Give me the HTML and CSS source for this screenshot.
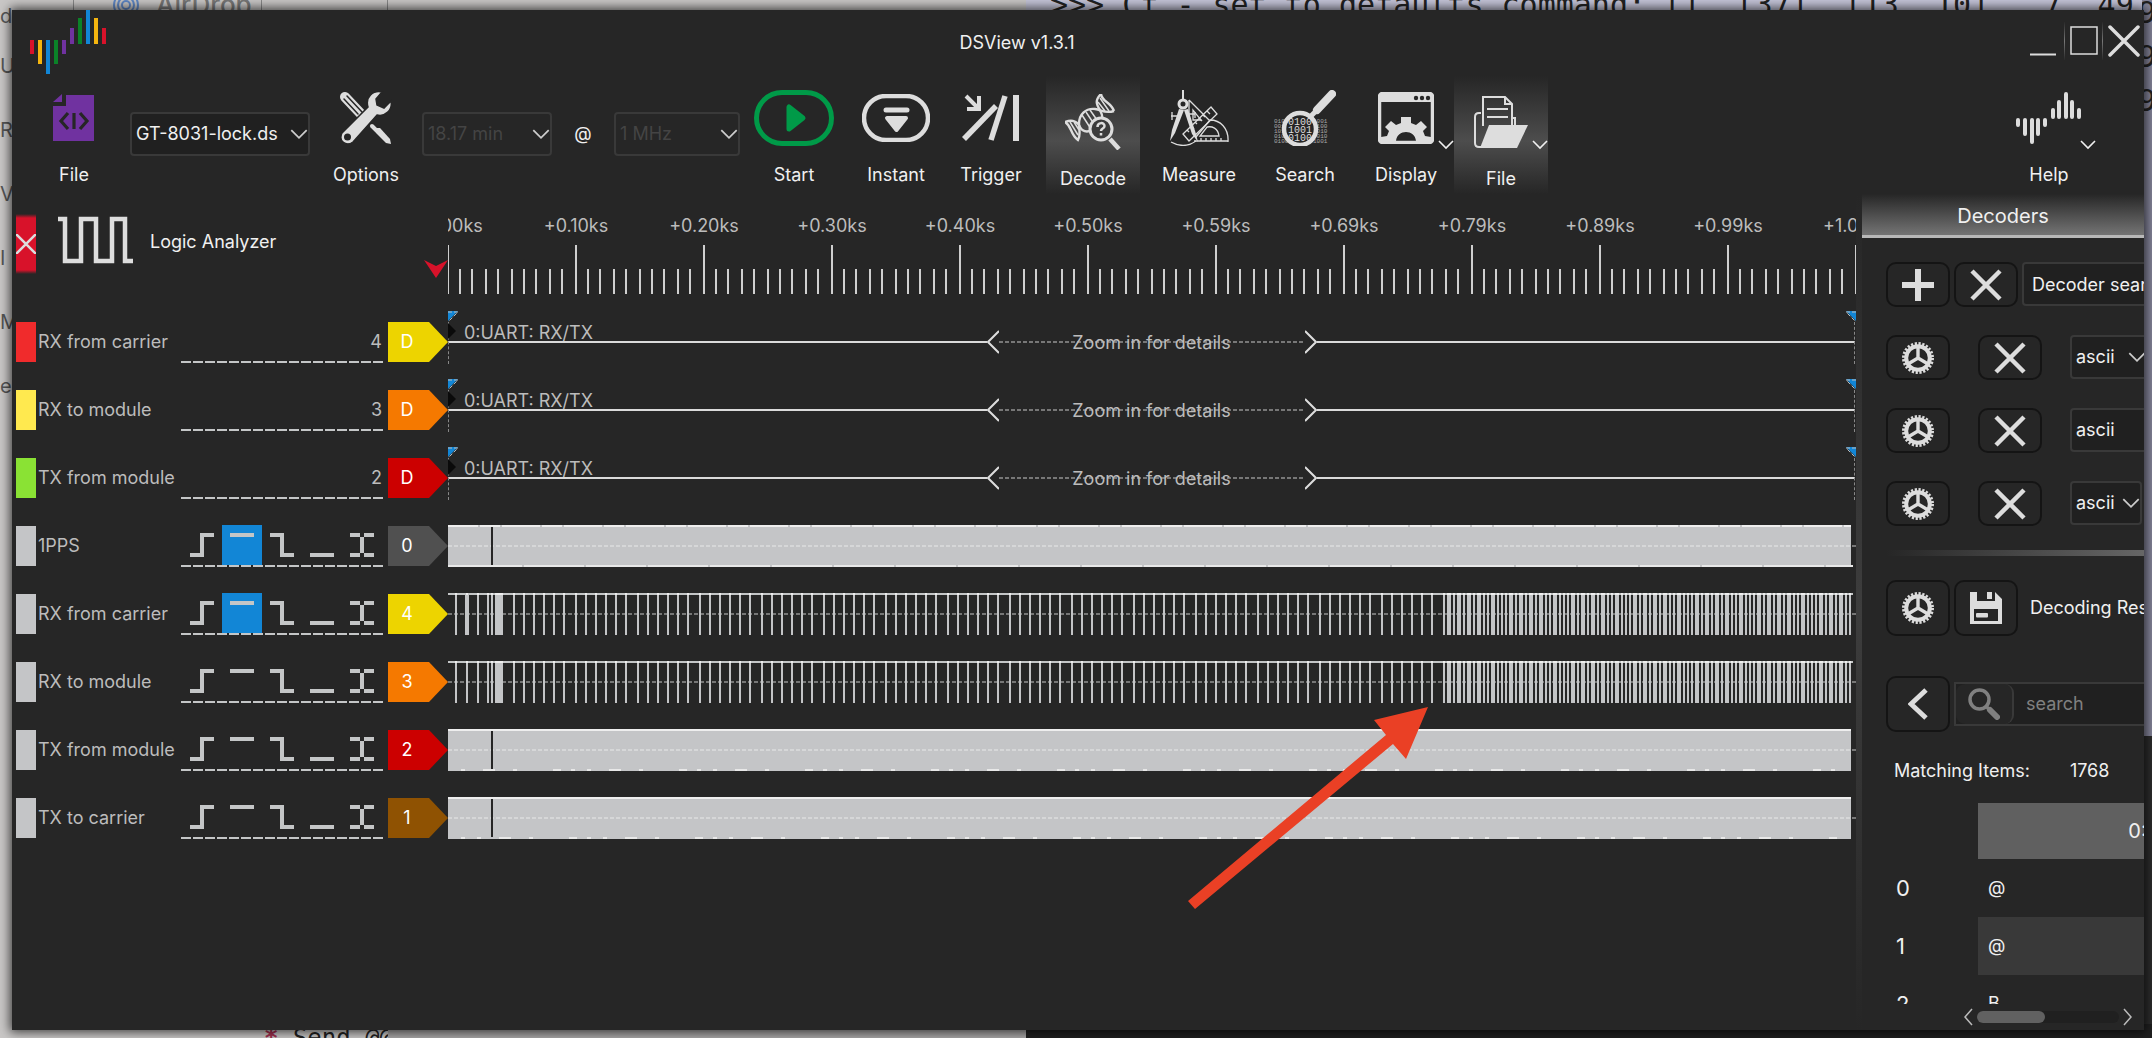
FILE: index.html
```html
<!DOCTYPE html>
<html lang="en">
<head>
<meta charset="utf-8">
<title>DSView v1.3.1</title>
<link rel="stylesheet" href="styles.css">
</head>
<body>
<svg class="sprite" aria-hidden="true">
  <symbol id="chev" viewBox="0 0 16 10"><path d="M1 1l7 7 7-7" fill="none" stroke="currentColor" stroke-width="1.6"/></symbol>
  <symbol id="cross" viewBox="0 0 32 32"><path d="M2 2l28 28M30 2L2 30" stroke="currentColor" stroke-width="4.5"/></symbol>
  <symbol id="gear" viewBox="0 0 32 32"><g fill="none" stroke="currentColor"><circle cx="16" cy="16" r="14.5" stroke-width="3" stroke-dasharray="2.2 1.6"/><circle cx="16" cy="16" r="11.8" stroke-width="4"/><path d="M16 16V4M16 16l-10 6M16 16l10 6" stroke-width="3.4"/></g></symbol>
  <symbol id="t-rise" viewBox="0 0 40 40"><path d="M8 30h14M18 10h14" stroke-width="4"/><path d="M20 8v24" stroke-width="4"/></symbol>
  <symbol id="t-high" viewBox="0 0 40 40"><path d="M8 10h24" stroke-width="4"/></symbol>
  <symbol id="t-fall" viewBox="0 0 40 40"><path d="M8 10h14M18 30h14" stroke-width="4"/><path d="M20 8v24" stroke-width="4"/></symbol>
  <symbol id="t-low" viewBox="0 0 40 40"><path d="M8 30h24" stroke-width="4"/></symbol>
  <symbol id="t-both" viewBox="0 0 40 40"><path d="M8 10h10M22 10h10M8 30h10M22 30h10M20 12v16" stroke-width="4"/></symbol>
</svg>

<div class="backdrop" aria-hidden="true">
  <div class="back-top">
    <span class="finder-tab"></span>
    <span class="finder-item"><svg width="28" height="28" viewBox="0 0 28 28"><g fill="none" stroke="#5f87c4" stroke-width="2"><circle cx="14" cy="14" r="12"/><circle cx="14" cy="14" r="8"/><circle cx="14" cy="14" r="4"/></g></svg>AirDrop</span>
    <span class="finder-gap"></span>
    <pre class="term">&gt;&gt;&gt; Cf - set to defaults command: [], [37], [13, 10],  7, 49</pre>
  </div>
  <div class="back-left"><span>d</span><span>U</span><span>R</span><span>V</span><span>I</span><span>M</span><span>e</span></div>
  <div class="back-right"><span>9</span><span>9</span><span>9</span></div>
  <div class="back-bottom"><pre><b>*</b> Send @@</pre></div>
</div>

<main class="window">
  <header class="titlebar">
    <svg class="logo" width="76" height="64" viewBox="0 0 76 64" shape-rendering="crispEdges" aria-hidden="true">
      <path fill="#d8122a" d="M0 30h4v14H0zM72 18h4v16h-4z"/>
      <path fill="#f5b50f" d="M8 30h4v24H8zM64 8h4v26h-4z"/>
      <path fill="#1286d6" d="M16 30h4v34h-4zM56 0h4v34h-4z"/>
      <path fill="#0b8228" d="M24 30h4v24h-4zM48 8h4v26h-4z"/>
      <path fill="#7032a0" d="M32 30h4v14h-4zM40 18h4v16h-4z"/>
    </svg>
    <h1>DSView v1.3.1</h1>
    <div class="win-controls">
      <button aria-label="Minimize"><svg width="26" height="30"><path d="M0 28.500h26" stroke="#ddd" stroke-width="2"/></svg></button>
      <button aria-label="Maximize"><svg width="28" height="30"><rect x="1" y="1" width="26" height="27" fill="none" stroke="#ddd" stroke-width="1.500"/></svg></button>
      <button aria-label="Close"><svg width="32" height="32"><path d="M2 2l28 28M30 2L2 30" stroke="#ddd" stroke-width="3.500" stroke-linecap="round"/></svg></button>
    </div>
  </header>

  <nav class="toolbar">
    <button class="tool w100"><span class="ico"><svg width="42" height="48" viewBox="0 0 42 48"><path fill="#7032a0" d="M13 1h28v46H0V12h13z"/><path fill="#7032a0" d="M0 8L9 0v8z"/><path d="M15 19l-7 8 7 8M27 19l7 8-7 8M21 19v16" fill="none" stroke="#262626" stroke-width="3.200"/></svg></span>File</button>
    <label class="combo device"><select aria-label="Device"><option>GT-8031-lock.ds</option></select><svg width="18" height="11"><use href="#chev"/></svg></label>
    <button class="tool w100"><span class="ico"><svg width="52" height="54" viewBox="0 0 52 54"><g stroke-linecap="round" fill="none"><path d="M5 6l16 17" stroke="#ddd" stroke-width="10"/><path d="M7 5l15 16M4 8l14 15" stroke="#262626" stroke-width="1.500"/><path d="M32 35l5 5" stroke="#ddd" stroke-width="4"/></g><path fill="#ddd" d="M36 37l4 0 10 11 1 5-5-1-10-10z"/><path stroke="#262626" stroke-width="1.500" fill="#ddd" d="M42 1c-9-2-17 5-14 15L2 42c-4 8 4 14 11 9l24-27c8 2 16-5 14-14l-7 7-7-3-1-6z"/><circle cx="7.500" cy="46" r="3.500" fill="#262626"/></svg></span>Options</button>
    <label class="combo span"><select aria-label="Sample duration" disabled><option>18.17 min</option></select><svg width="18" height="11"><use href="#chev"/></svg></label>
    <span class="at">@</span>
    <label class="combo rate"><select aria-label="Sample rate" disabled><option>1 MHz</option></select><svg width="18" height="11"><use href="#chev"/></svg></label>
    <button class="tool w96"><span class="ico"><svg width="80" height="56" viewBox="0 0 80 56"><rect x="2.500" y="2.500" width="75" height="51" rx="25.500" fill="none" stroke="#009a48" stroke-width="5"/><path d="M35 17v22l14-11z" fill="#009a48" stroke="#009a48" stroke-width="5" stroke-linejoin="round"/></svg></span>Start</button>
    <button class="tool w96"><span class="ico"><svg width="68" height="48" viewBox="0 0 68 48"><rect x="2" y="2" width="64" height="44" rx="22" fill="none" stroke="#ddd" stroke-width="4.500"/><path d="M24 16h21" stroke="#ddd" stroke-width="5" stroke-linecap="round"/><path d="M25 24h19l-9.500 12z" fill="#ddd" stroke="#ddd" stroke-width="4" stroke-linejoin="round"/></svg></span>Instant</button>
    <button class="tool w82"><span class="ico"><svg width="60" height="48" viewBox="0 0 60 48"><path d="M5 2l13 13M6 15h12V2" fill="none" stroke="#ddd" stroke-width="4"/><path d="M3 45l32-33" stroke="#ddd" stroke-width="5.500"/><path d="M30 46L44 2" stroke="#ddd" stroke-width="5.500"/><path d="M55 1v46" stroke="#ddd" stroke-width="6"/></svg></span>Trigger</button>
    <button class="tool w94 on decode-btn" aria-pressed="true"><span class="ico"><svg width="56" height="56" viewBox="0 0 56 56"><g fill="none" stroke="#ddd" stroke-width="2.400"><path d="M0 28C8 25 13 28 15 33c2 4 6 5 10 4"/><path d="M0 28c7 4 5 12 13 18 3-5 1-10 1-16 0-10 7-16 16-15 7 1 10 5 19 2"/><path d="M36 0c-6 6-5 10-1 16 2 4 3 7 2 10"/><path d="M36 0c1 8 10 8 13 17"/></g><g stroke="#ddd" stroke-width="1.500"><path d="M5 28l8 13M9 28l5 8M17 21l9 14M21 18l8 12M25 16l7 10M33 8l7 9M35 4l9 13"/></g><circle cx="36" cy="35" r="11" fill="#3c3c3c" stroke="#ddd" stroke-width="3"/><path d="M45 45l9 10" stroke="#ddd" stroke-width="4.500"/><path d="M32.500 33c0-5 7-5 7-1 0 3-3.500 2-3.500 5M36 39v2.500" fill="none" stroke="#ddd" stroke-width="2.500"/></svg></span>Decode</button>
    <button class="tool w106"><span class="ico"><svg width="60" height="56" viewBox="0 0 60 56"><g fill="none" stroke="#ddd" stroke-width="1.300"><path d="M20 10l20 20M20 10v22M24 20v10h8zM25 51h34M59 52c1-14-8-22-18-22l-14 17M50 46c-1-8-7-10-12-9l-7 9z"/><path d="M14 44L42 17l6 7-28 27zM38 21l3 3M34 25l2 2M30 28l3 3M26 32l2 2M22 36l3 3M18 40l2 2"/><path d="M2 52c9 5 18 4 25-1M2 26h6M3 22v8M20 24h6M26 22v6"/><path d="M32 51v-3M37 51v-3M42 51v-3M47 51v-3M52 51v-3"/></g><path d="M14 0v10" stroke="#ddd" stroke-width="2"/><circle cx="14" cy="14" r="4" fill="#262626" stroke="#ddd" stroke-width="3"/><path fill="#ddd" d="M10 19l5 1-9 23-5 8 2-11zM15 20l4-1 8 25 2 8-6-8z"/></svg></span>Measure</button>
    <button class="tool w94"><span class="ico"><svg width="62" height="56" viewBox="0 0 62 56"><g fill="#aaa" font-family="Liberation Mono" font-size="6"><text x="0" y="33">0101</text><text x="0" y="38">0010</text><text x="0" y="43">1010</text><text x="0" y="48">0101</text><text x="0" y="53">0100</text><text x="39" y="33">1001</text><text x="39" y="38">0100</text><text x="39" y="43">1010</text><text x="39" y="48">0010</text><text x="39" y="53">1001</text></g><circle cx="26" cy="39" r="16" fill="#262626" stroke="#ddd" stroke-width="4.500"/><g fill="#ddd" font-family="Liberation Mono" font-size="10"><text x="14" y="35">0100</text><text x="14" y="43">1001</text><text x="14" y="51">0100</text></g><path d="M37 26l4-4" stroke="#ddd" stroke-width="5"/><path d="M43 20L58 4" stroke="#ddd" stroke-width="8" stroke-linecap="round"/></svg></span>Search</button>
    <div class="tool-pair">
      <button class="tool w96"><span class="ico"><svg width="56" height="52" viewBox="0 0 56 52"><rect x="1.500" y="1.500" width="53" height="49" rx="3" fill="none" stroke="#ddd" stroke-width="3.500"/><path fill="#ddd" d="M1 2h54v8H1z"/><circle cx="38" cy="6" r="2.200" fill="#262626"/><circle cx="44" cy="6" r="2.200" fill="#262626"/><circle cx="50" cy="6" r="2.200" fill="#262626"/><path fill="#ddd" d="M3 49v-4l6-1 2-5-4-4 6-6 5 4 5-2V25h10v6l5 2 5-4 6 6-4 4 2 5 6 1v4H38c-1-12-19-12-20 0z"/></svg></span>Display<svg class="menu-chev" width="16" height="10"><use href="#chev"/></svg></button>
      <button class="tool w94 on"><span class="ico"><svg width="54" height="52" viewBox="0 0 54 52"><g fill="none" stroke="#ddd" stroke-width="2"><path d="M7 17H5c-3 0-4 1-4 4v26c0 3 1 4 4 4h4"/><path d="M9 30V1h22l7 7v22M31 1v7h7M41 22v10M39 22h3"/><path d="M13 13h21M13 21h21"/></g><path fill="#ddd" d="M15 29h39L43 52H6z"/></svg></span>File<svg class="menu-chev" width="16" height="10"><use href="#chev"/></svg></button>
    </div>
    <button class="tool w94 help"><span class="ico"><svg width="66" height="52" viewBox="0 0 66 52"><g stroke="#ddd" stroke-width="4" stroke-linecap="round"><path d="M2 28v5M9 28v14M16 28v22M22 28v14M29 28v5M37 18v7M43 10v15M50 2v23M56 10v15M63 18v7"/></g></svg></span>Help<svg class="menu-chev" width="16" height="10"><use href="#chev"/></svg></button>
  </nav>

  <div class="work">
    <section class="scope" aria-label="Logic analyzer channels">
      <div class="ruler-row">
        <div class="head">
          <button class="close-dev" aria-label="Close device"><svg width="20" height="20"><path d="M0 0l20 20M20 0L0 20" stroke="#ddd" stroke-width="2.500"/></svg></button>
          <svg class="square-wave" width="75" height="48" viewBox="0 0 75 48"><path d="M0 3h7v42h16V3h15v42h16V3h13v42h8" fill="none" stroke="#ddd" stroke-width="4.500"/></svg>
          <span>Logic Analyzer</span>
          <svg class="cursor" width="24" height="18"><path fill="#d8122a" d="M0 0l12 6 12-6-12 18z"/></svg>
        </div>
        <div class="ruler">
          <div class="marks"><span>+0.00ks</span><span>+0.10ks</span><span>+0.20ks</span><span>+0.30ks</span><span>+0.40ks</span><span>+0.50ks</span><span>+0.59ks</span><span>+0.69ks</span><span>+0.79ks</span><span>+0.89ks</span><span>+0.99ks</span><span>+1.09ks</span></div>
          <div class="ticks"></div>
        </div>
      </div>
      <div class="channels" id="channels"></div>
      <svg class="arrow" width="242" height="204" viewBox="0 0 242 204" aria-hidden="true"><path fill="#ea4025" d="M240 0L186 13l12 15L0 194l7 8L205 37l13 15z"/></svg>
    </section>
    <div class="splitter"></div>
    <aside class="decoders">
      <h2>Decoders</h2>
      <div class="panel">
        <div class="stack">
          <div class="bar"><button class="sq" aria-label="Add decoder"><svg width="32" height="32"><path d="M16 0v32M0 16h32" stroke="currentColor" stroke-width="6"/></svg></button><button class="sq" aria-label="Remove all"><svg width="32" height="32"><use href="#cross"/></svg></button><input class="finder" type="text" placeholder="Decoder search..." aria-label="Decoder search"></div>
          <div class="bar wide"><button class="sq" aria-label="Settings"><svg width="32" height="32"><use href="#gear"/></svg></button><button class="sq" aria-label="Remove"><svg width="32" height="32"><use href="#cross"/></svg></button><label class="combo fmt"><select aria-label="Format"><option>ascii</option></select><svg width="18" height="11"><use href="#chev"/></svg></label></div>
          <div class="bar wide"><button class="sq" aria-label="Settings"><svg width="32" height="32"><use href="#gear"/></svg></button><button class="sq" aria-label="Remove"><svg width="32" height="32"><use href="#cross"/></svg></button><label class="combo fmt large"><select aria-label="Format"><option>ascii</option></select><svg width="18" height="11"><use href="#chev"/></svg></label></div>
          <div class="bar wide"><button class="sq" aria-label="Settings"><svg width="32" height="32"><use href="#gear"/></svg></button><button class="sq" aria-label="Remove"><svg width="32" height="32"><use href="#cross"/></svg></button><label class="combo fmt small"><select aria-label="Format"><option>ascii</option></select><svg width="18" height="11"><use href="#chev"/></svg></label></div>
        </div>
        <hr>
        <div class="bar tall"><button class="sq" aria-label="Result settings"><svg width="32" height="32"><use href="#gear"/></svg></button><button class="sq" aria-label="Save results"><svg width="32" height="32" viewBox="0 0 32 32"><path fill="currentColor" fill-rule="evenodd" d="M0 0h7v9h18V0l7 7v25H0zM4 17v12h24V17z"/><path fill="currentColor" d="M17 0h5v7h-5z"/><rect x="6" y="21" width="12" height="4.500" rx="1" fill="currentColor"/></svg></button><span class="caption">Decoding Results</span></div>
        <div class="bar tall find-row"><button class="sq" aria-label="Previous"><svg width="20" height="32"><path d="M18 2L3 16l15 14" fill="none" stroke="currentColor" stroke-width="5"/></svg></button><div class="search-box"><button aria-label="Search options"><svg width="32" height="32"><circle cx="11.500" cy="11.500" r="9.500" fill="none" stroke="#808080" stroke-width="3.500"/><path d="M19 19l3 4" stroke="#808080" stroke-width="3.500"/><path d="M22 22l7 7" stroke="#808080" stroke-width="6" stroke-linecap="round"/></svg></button><input type="text" placeholder="search" aria-label="search"></div></div>
        <div class="matching"><span>Matching Items:</span><output>1768</output></div>
        <div class="results">
          <table>
            <thead><tr><td></td><th scope="col">0:UART: RX/TX</th></tr></thead>
            <tbody><tr><th scope="row">0</th><td>@</td></tr><tr><th scope="row">1</th><td>@</td></tr><tr><th scope="row">2</th><td>B</td></tr></tbody>
          </table>
        </div>
        <div class="hscroll"><svg width="9" height="18"><path d="M8 1L1 9l7 8" fill="none" stroke="#bbb" stroke-width="1.500"/></svg><div class="track"><div class="thumb"></div></div><svg width="9" height="18"><path d="M1 1l7 8-7 8" fill="none" stroke="#bbb" stroke-width="1.500"/></svg></div>
      </div>
    </aside>
  </div>
</main>
<script src="app.js"></script>
</body>
</html>
```
FILE: styles.css
```css
* { box-sizing: border-box; }
body { margin: 0; height: 100vh; padding: 10px 8px 8px 12px; display: flex; overflow: hidden; position: relative; background: #c9c7c6; font: 18px/24px Inter, "Noto Sans", sans-serif; color: #f0f0f0; }
button, input, select { font: inherit; color: inherit; border: 0; margin: 0; padding: 0; background: none; }
.sprite { position: absolute; width: 0; height: 0; }

/* other windows behind the application */
.backdrop { position: absolute; inset: 0; overflow: hidden; color: #222; }
.backdrop pre { margin: 0; font: 30px/34px "DejaVu Sans Mono", monospace; }
.back-top { display: flex; height: 20px; overflow: hidden; align-items: flex-end; }
.back-top > * { height: 30px; flex: none; }
.finder-tab { width: 74px; border-right: 1px solid #888; }
.finder-item { width: 188px; padding-left: 38px; display: flex; gap: 16px; align-items: center; font-size: 26px; font-weight: 500; color: #777; border-right: 1px solid #888; }
.finder-gap { width: 126px; border-right: 1px solid #888; }
.back-top .term { margin-left: 638px; padding-left: 24px; flex: 1; background: #c4c4d8; line-height: 30px; }
.back-left { position: absolute; left: 0; top: 4px; width: 12px; display: flex; flex-direction: column; gap: 40px; font-size: 20px; color: #555; }
.back-left span:first-child { margin-bottom: -14px; }
.back-right { position: absolute; right: 0; top: 0; width: 10px; height: 736px; overflow: hidden; background: #85859a; box-shadow: 0 400px #2c2c2c; display: flex; flex-direction: column; gap: 18px; }
.back-right span { font: 30px/26px "DejaVu Sans Mono", monospace; margin-left: -4px; }
.back-bottom { position: absolute; left: 0; right: 0; bottom: 0; height: 14px; overflow: hidden; padding-left: 264px; background: linear-gradient(90deg, #c9c7c6 388px, #a8a6a6 388px 1026px, #202020 1026px); }
.back-bottom pre { font-size: 24px; line-height: 28px; width: 124px; overflow: hidden; }
.back-bottom b { color: #a33050; }

.window { flex: 1; min-width: 0; position: relative; display: flex; flex-direction: column; background: #262626; overflow: hidden; box-shadow: 0 0 10px 2px rgba(0,0,0,.7); }

.titlebar { display: flex; height: 66px; flex: none; padding-left: 18px; }
.titlebar h1 { flex: 1; margin: 0; padding-right: 98px; font-size: 18px; font-weight: 400; line-height: 66px; text-align: center; }
.win-controls { display: flex; align-items: center; height: 58px; margin-top: 2px; }
.win-controls button { height: 38px; display: grid; place-items: center; padding: 0 4px; }
.win-controls button:first-child { padding-right: 8px; }
.win-controls button + button { border-left: 1px solid; border-image: linear-gradient(transparent, #777, transparent) 1; padding-left: 5px; }

.toolbar { display: flex; align-items: center; gap: 6px; height: 118px; flex: none; padding: 0 48px 0 12px; }
.tool { height: 118px; flex: none; display: flex; flex-direction: column; align-items: center; padding-top: 12px; position: relative; }
.tool .ico { height: 60px; margin-bottom: 15px; display: grid; place-items: center; }
.tool.on { padding-top: 16px; background: linear-gradient(transparent, #4d4d4d 55%, transparent); }
.tool .menu-chev { position: absolute; right: 0; top: 64px; }
.tool-pair { display: flex; }
.w82 { width: 82px; } .w94 { width: 94px; } .w96 { width: 96px; } .w100 { width: 100px; } .w106 { width: 106px; }
.decode-btn { margin-left: 8px; }
.help { margin-left: auto; }
.at { width: 50px; text-align: center; }
.combo { display: grid; align-items: center; height: 44px; flex: none; border: 2px solid #393939; border-radius: 4px; background: #202020; }
.toolbar .combo, .toolbar .at { margin-top: -2px; }
.combo select, .combo svg { grid-area: 1 / 1; }
.combo select { appearance: none; width: 100%; height: 40px; padding: 0 0 0 4px; opacity: 1; }
.combo svg { justify-self: end; color: #ccc; pointer-events: none; }
.combo select:disabled { color: #444; }
.combo:has(:disabled) { background: none; }
.device { width: 180px; } .span { width: 130px; } .rate { width: 126px; }

.work { flex: 1; min-height: 0; display: grid; grid-template-columns: minmax(0, 1fr) 6px 282px; }
.scope { position: relative; }
.ruler-row, .channel { display: grid; grid-template-columns: 436px minmax(0, 1fr); }
.ruler-row { height: 114px; }
.head { position: relative; display: flex; padding: 20px 0 0 4px; }
.close-dev { width: 20px; height: 60px; display: grid; place-items: center; background: linear-gradient(transparent, #d8122a 4px 56px, transparent); }
.square-wave { margin: 2px 17px 0 22px; }
.head span { padding-top: 16px; }
.cursor { position: absolute; right: 0; bottom: 30px; }
.ruler { overflow: hidden; padding-top: 20px; color: #bcbcbc; }
.marks { display: flex; margin-left: -64px; height: 31px; }
.marks span { flex: none; width: 128px; text-align: center; }
.ticks { height: 49px; --t: #cfcfcf; background:
  repeating-linear-gradient(90deg, var(--t) 0 1px, transparent 1px 127px, var(--t) 127px 128px),
  repeating-linear-gradient(90deg, transparent 0 11px, var(--t) 11px 13px, transparent 13px 23px, var(--t) 23px 25px, transparent 25px 37px, var(--t) 37px 39px, transparent 39px 49px, var(--t) 49px 51px, transparent 51px 63px, var(--t) 63px 65px, transparent 65px 75px, var(--t) 75px 77px, transparent 77px 87px, var(--t) 87px 89px, transparent 89px 101px, var(--t) 101px 103px, transparent 103px 113px, var(--t) 113px 115px, transparent 115px 128px) 0 100% / 100% 25px no-repeat; }

.channel { height: 68px; color: #bcbcbc; }
.ch-head { display: grid; grid-template-columns: 20px 145px 202px 65px; align-items: center; padding-left: 4px; }
.swatch { height: 40px; }
.ch-name { padding-left: 2px; white-space: nowrap; }
.triggers { display: flex; justify-content: flex-end; height: 42px; padding: 0 1px 2px; background: repeating-linear-gradient(90deg, #c4c6c7 0 10px, transparent 10px 12px) 0 100% / 100% 2px no-repeat; }
.triggers button { width: 40px; height: 40px; }
.triggers svg { display: block; stroke: #c4c6c7; shape-rendering: crispEdges; }
.triggers .on { background: #1286d6; }
.triggers span { line-height: 42px; }
.flag { height: 40px; margin-left: 5px; width: 60px; padding-right: 22px; color: #fff; clip-path: polygon(0 0, 41px 0, 100% 50%, 41px 100%, 0 100%); }
.lane { position: relative; min-width: 0; }
.lane > svg { display: block; width: 100%; height: 68px; shape-rendering: crispEdges; }
.decode-lane { display: flex; align-items: center; padding-right: 1px; }
.decode-lane::before, .decode-lane::after { content: ""; position: absolute; top: 14px; height: 42px; border-left: 1px dashed #888; left: 0; }
.decode-lane::after { left: auto; right: 1px; }
.decode-lane .wire { flex: 1; height: 2px; background: #dadada; }
.decode-lane svg { flex: none; width: 12px; height: 24px; display: block; shape-rendering: auto; }
.note { width: 306px; text-align: center; line-height: 24px; padding-top: 2px; background: repeating-linear-gradient(90deg, #777 0 4px, transparent 4px 6px) 0 50% / 100% 2px no-repeat; }
.decode-lane .edge { position: absolute; top: 3px; left: 0; width: 10px; height: 28px; }
.decode-lane .edge.end { left: auto; right: 0; }
.ann { position: absolute; left: 16px; top: 13px; white-space: nowrap; }
.arrow { position: absolute; left: 1176px; top: 513px; }

.splitter { background: linear-gradient(transparent, #3d3d3d 50%, transparent); }
.decoders { min-width: 0; overflow: hidden; display: flex; flex-direction: column; }
.decoders h2 { margin: 0; height: 44px; flex: none; font-size: 20px; font-weight: 400; line-height: 44px; text-align: center; border-bottom: 3px solid #b8b8b8; background: linear-gradient(#262626, #747474); }
.panel { flex: 1; min-height: 0; display: flex; flex-direction: column; padding: 24px 0 0 24px; }
.stack { display: flex; flex-direction: column; gap: 28px; }
.bar { display: flex; gap: 4px; height: 45px; flex: none; align-items: stretch; }
.bar.wide { gap: 28px; }
.bar.tall { height: 56px; align-items: center; }
.sq { width: 64px; height: 100%; flex: none; display: grid; place-items: center; border: 2px solid #141414; border-radius: 10px; color: #ddd; }
.finder { width: 180px; flex: none; padding-left: 8px; border: 2px solid #393939; border-radius: 4px; background: #202020; height: 44px; }
.finder::placeholder { color: #f0f0f0; opacity: 1; }
.fmt { width: 78px; } .fmt.large { width: 100px; } .fmt.small { width: 72px; }
hr { width: 100%; height: 6px; flex: none; margin: 24px 0; border: 0; background: linear-gradient(90deg, #262626, #666); }
.caption { padding-left: 8px; white-space: nowrap; }
.find-row { margin-top: 40px; }
.search-box { display: flex; flex: none; width: 260px; height: 44px; border: 2px solid #393939; background: #202020; }
.search-box button { width: 58px; display: grid; place-items: center; border: 2px solid #393939; border-width: 0 2px 0 0; border-radius: 9px; background: #262626; }
.search-box input { width: 190px; padding-left: 12px; }
.search-box input::placeholder { color: #808080; opacity: 1; }
.matching { display: flex; gap: 40px; padding: 27px 0 20px 8px; white-space: nowrap; }
.results { flex: 1; min-height: 0; overflow: hidden; }
table { border-collapse: collapse; table-layout: fixed; width: 536px; }
td, th { padding: 0 0 0 10px; text-align: left; font-weight: 400; height: 58px; }
td:first-child, tbody th { width: 92px; font-size: 22px; }
thead td, thead th { height: 56px; }
thead th { background: #606060; text-align: center; font-size: 20px; padding: 0; }
tbody tr:nth-child(2) td { background: #393939; }
.hscroll { display: flex; align-items: center; gap: 4px; height: 26px; flex: none; padding: 0 12px 0 78px; }
.hscroll .track { flex: 1; height: 12px; border-radius: 6px; background: #202020; }
.hscroll .thumb { width: 68px; height: 12px; border-radius: 6px; background: #616161; }
```
FILE: app.js
```js
const DECODERS = [
  { name: 'RX from carrier', idx: 4, swatch: '#f02b2c', flag: '#edd400' },
  { name: 'RX to module', idx: 3, swatch: '#ffe94f', flag: '#f57900' },
  { name: 'TX from module', idx: 2, swatch: '#8ae234', flag: '#cc0000' }
];
const SIGNALS = [
  { name: '1PPS', idx: 0, flag: '#505050', kind: 'pps', trigger: 'high' },
  { name: 'RX from carrier', idx: 4, flag: '#edd400', kind: 'rx', trigger: 'high' },
  { name: 'RX to module', idx: 3, flag: '#f57900', kind: 'rx' },
  { name: 'TX from module', idx: 2, flag: '#cc0000', kind: 'tx' },
  { name: 'TX to carrier', idx: 1, flag: '#8f5202', kind: 'tx' }
];
const TRIGGERS = ['rise', 'high', 'fall', 'low', 'both'];
const BURST = [2, 1, 2, 1, 2, 1, 2, 1, 1, 2, 1, 1, 1];

const rect = (x, y, w, h, fill) => `<rect x="${x}" y="${y}" width="${w}" height="${h}" fill="${fill}"/>`;
const midline = (w, color) => `<path d="M0 34H${w}" stroke="${color}" stroke-width="2" stroke-dasharray="4 2"/>`;

function pulses(width) {
  const bars = [[7, 2], [18, 2], [29, 2], [39, 2], [43, 2], [47, 8]];
  for (let x = 65, i = 0; x < 997; i++) {
    bars.push([x, 2]);
    x += i % 6 === 5 ? 12 : 10;
  }
  for (let x = 999, i = 0; x < width; i++) {
    const w = BURST[i % BURST.length] * 2;
    bars.push([x, Math.min(w, width - x)]);
    x += w + 2;
  }
  return bars;
}

function wave(kind, idx, full) {
  const w = full - 5;
  let s = '';
  if (kind === 'rx') {
    s += midline(full, '#777') + rect(0, 13, full - 3, 2, '#c4c6c7');
    for (const [x, bw] of pulses(w)) {
      const wide = idx === 4 && x === 18;
      s += rect(wide ? 17 : x, 13, wide ? 4 : bw, 42, '#c4c5c7') + rect(x, 13, bw, 2, '#eee');
    }
    return s;
  }
  s += rect(0, 13, w, 42, '#c4c5c7') + rect(0, 13, w, 2, '#eee');
  s += midline(full, '#777') + rect(0, 33, w, 2, '#c4c5c7') + midline(w, '#d6d7d8');
  if (kind === 'pps') {
    s += rect(0, 53, w + 2, 2, '#e8e8e8');
    for (let x = 30; x < w; x += 62) s += rect(x, 13, 2, 2, '#c4c5c7') + rect(x + 22, 13, 2, 2, '#c4c5c7') + rect(x + 44, 53, 2, 2, '#c4c5c7');
  } else {
    for (let x = 13, i = idx; x < w - 8; i++) {
      s += rect(x, 53, i % 3 ? 4 : 8, 2, '#e8e8e8');
      x += [18, 16, 22, 8, 22, 40][i % 6];
    }
  }
  return s + rect(43, 15, 2, 38, '#262626');
}

function channel(c, decode) {
  const mid = decode
    ? `<span>${c.idx}</span>`
    : TRIGGERS.map(t => `<button class="${c.trigger === t ? 'on' : ''}" aria-label="${t}"><svg width="40" height="40"><use href="#t-${t}"/></svg></button>`).join('');
  const lane = decode
    ? `<div class="lane decode-lane"><i class="wire"></i><svg><path d="M12 1L1 12l11 11" fill="none" stroke="#ddd" stroke-width="2"/></svg><span class="note">Zoom in for details</span><svg><path d="M0 1l11 11L0 23" fill="none" stroke="#ddd" stroke-width="2"/></svg><i class="wire"></i>
       <svg class="edge"><path d="M0 0h10L0 10z" fill="#1286d6"/><path d="M0 1h10L0 11" fill="none" stroke="#bbb" stroke-dasharray="4 2"/><path d="M0 12l8 8-8 8z" fill="#0a0a0a"/></svg>
       <svg class="edge end"><path d="M0 0h10v10z" fill="#1286d6"/><path d="M10 1H0l10 10" fill="none" stroke="#bbb" stroke-dasharray="4 2"/></svg>
       <span class="ann">0:UART: RX/TX</span></div>`
    : `<div class="lane"><svg data-kind="${c.kind}" data-idx="${c.idx}"></svg></div>`;
  return `<div class="channel"><div class="ch-head"><span class="swatch" style="background:${c.swatch || '#c4c5c7'}"></span><span class="ch-name">${c.name}</span><div class="triggers">${mid}</div><button class="flag" style="background:${c.flag}">${decode ? 'D' : c.idx}</button></div>${lane}</div>`;
}

const list = document.getElementById('channels');
list.innerHTML = DECODERS.map(c => channel(c, true)).join('') + SIGNALS.map(c => channel(c, false)).join('');

function draw() {
  for (const svg of list.querySelectorAll('svg[data-kind]')) {
    svg.innerHTML = wave(svg.dataset.kind, Number(svg.dataset.idx), svg.parentNode.clientWidth);
  }
}
draw();
addEventListener('resize', draw);
```
